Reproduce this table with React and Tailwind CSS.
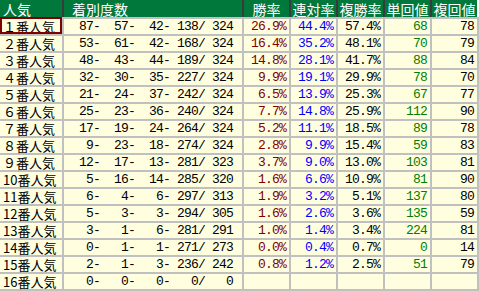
const rows = [
  ["１番人気", [87, 57, 42, 138, 324], "26.9%", "44.4%", "57.4%", "68", "78"],
  ["２番人気", [53, 61, 42, 168, 324], "16.4%", "35.2%", "48.1%", "70", "79"],
  ["３番人気", [48, 43, 44, 189, 324], "14.8%", "28.1%", "41.7%", "88", "84"],
  ["４番人気", [32, 30, 35, 227, 324], "9.9%", "19.1%", "29.9%", "78", "70"],
  ["５番人気", [21, 24, 37, 242, 324], "6.5%", "13.9%", "25.3%", "67", "77"],
  ["６番人気", [25, 23, 36, 240, 324], "7.7%", "14.8%", "25.9%", "112", "90"],
  ["７番人気", [17, 19, 24, 264, 324], "5.2%", "11.1%", "18.5%", "89", "78"],
  ["８番人気", [9, 23, 18, 274, 324], "2.8%", "9.9%", "15.4%", "59", "83"],
  ["９番人気", [12, 17, 13, 281, 323], "3.7%", "9.0%", "13.0%", "103", "81"],
  ["10番人気", [5, 16, 14, 285, 320], "1.6%", "6.6%", "10.9%", "81", "90"],
  ["11番人気", [6, 4, 6, 297, 313], "1.9%", "3.2%", "5.1%", "137", "80"],
  ["12番人気", [5, 3, 3, 294, 305], "1.6%", "2.6%", "3.6%", "135", "59"],
  ["13番人気", [3, 1, 6, 281, 291], "1.0%", "1.4%", "3.4%", "224", "81"],
  ["14番人気", [0, 1, 1, 271, 273], "0.0%", "0.4%", "0.7%", "0", "14"],
  ["15番人気", [2, 1, 3, 236, 242], "0.8%", "1.2%", "2.5%", "51", "79"],
  ["16番人気", [0, 0, 0, 0, 0], "", "", "", "", ""],
];

const pad = (n) => String(n).padStart(4, " ");
const record = (r) => `${pad(r[0])}-${pad(r[1])}-${pad(r[2])}-${pad(r[3])}/${pad(r[4])}`;

const cols = "grid grid-cols-[62px_178px_45px_45px_45px_45px_45px]";
const jp = "font-['Noto_Sans_CJK_JP',sans-serif]";
const mono = "font-['Liberation_Mono','Noto_Sans_CJK_JP',monospace] text-[13px] tracking-[-0.8px]";

function Num({ children, color }) {
  return (
    <div className={`bg-[#ffffe0] pr-[3px] text-right leading-[15px] whitespace-pre ${mono} ${color}`}>
      {children}
    </div>
  );
}

export default function App() {
  const heads = ["勝率", "連対率", "複勝率", "単回値", "複回値"];
  return (
    <div className="w-[479px] h-[291px] bg-white overflow-hidden">
      <div className={`${cols} gap-x-[2px] bg-[#3a3a3a] h-[17px] w-[477px] text-white text-[14px] leading-none ${jp}`}>
        <div className="bg-[#00783c] pl-[3px] flex items-center">人気</div>
        <div className="bg-[#00783c] pl-[8px] flex items-center">着別度数</div>
        {heads.map((h) => (
          <div key={h} className="bg-[#00783c] flex items-center justify-center">{h}</div>
        ))}
      </div>
      <div className={`${cols} gap-[2px] auto-rows-[15px] bg-[#c0c0c0] pt-[2px] pb-[2px] pr-[2px]`}>
        {rows.map((r, i) => (
          <div key={r[0]} className="contents">
            <div className={`relative bg-[#ffffe0] pl-[3px] text-[13px] leading-none text-black whitespace-nowrap flex items-center ${jp}`}>
              {r[0]}
              {i === 0 && (
                <div className="absolute left-0 right-0 -top-[2px] bottom-0 border-2 border-[#800000]" />
              )}
            </div>
            <div className={`bg-[#ffffe0] pl-px leading-[15px] whitespace-pre text-black ${mono}`}>
              {record(r[1])}
            </div>
            <Num color="text-[#800000]">{r[2]}</Num>
            <Num color="text-[#0000ff]">{r[3]}</Num>
            <Num color="text-black">{r[4]}</Num>
            <Num color="text-[#008000]">{r[5]}</Num>
            <Num color="text-black">{r[6]}</Num>
          </div>
        ))}
      </div>
    </div>
  );
}
